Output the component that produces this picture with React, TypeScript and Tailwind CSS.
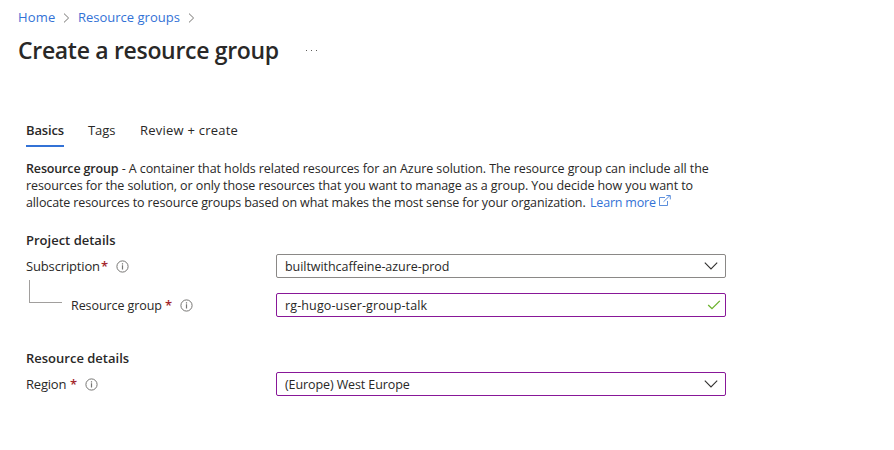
import React from "react";

const Info = () => (
  <svg className="size-[13px] shrink-0" viewBox="0 0 13 13" fill="none" stroke="#767573">
    <circle cx="6.5" cy="6.5" r="5.6" strokeWidth="1" />
    <path d="M6.5 5.3V9.5M6.5 3.3V4.5" strokeWidth="1.2" />
  </svg>
);
const Chevron = () => (
  <svg className="-mr-px h-[8px] w-[14px]" viewBox="0 0 14 8" fill="none" stroke="#323130" strokeWidth="1.1">
    <path d="M.8 .7L7 6.9L13.2 .7" />
  </svg>
);
const Check = () => (
  <svg className="-mr-[4px] h-[10px] w-[14px]" viewBox="0 0 14 10" fill="none" stroke="#6bb12c" strokeWidth="1.3">
    <path d="M1.2 5L5 8.7L12.8 .9" />
  </svg>
);
const Crumb = () => (
  <svg className="mt-[2px] h-[10px] w-[7px]" viewBox="0 0 7 10" fill="none" stroke="#767573">
    <path d="M1 .6L5.6 5L1 9.4" />
  </svg>
);
const External = () => (
  <svg className="mt-px ml-[4px] h-[11px] w-[12px]" viewBox="0 0 12 11" fill="none" stroke="#4a82d8" strokeWidth=".9">
    <path d="M6 2.5H.5V10.5H8.5V6M4.5 6.8L11 .5M7.3 .5H11.3V4.4" />
  </svg>
);
const Star = () => (
  <span className="w-[15px] text-[13px] font-semibold text-[#a4262c]">*</span>
);

export default function App() {
  return (
    <main className="h-[450px] w-[894px] overflow-hidden whitespace-nowrap bg-white font-['Open_Sans','Noto_Sans',sans-serif] text-[13px] leading-[17px] text-[#292827]">
      <nav className="flex h-[34px] items-center pl-[18px] text-[#3372d6]">
        <span className="w-[45px] tracking-[0.15px]">Home</span><Crumb />
        <span className="ml-[8px] w-[110px]">Resource groups</span><Crumb />
      </nav>
      <header className="flex h-[34px] items-center pl-[18px]">
        <h1 className="-mt-[2px] w-[288px] text-[23px] font-semibold leading-[34px] tracking-[-0.31px]">Create a resource group</h1>
        <svg className="h-[2px] w-[11px]" viewBox="0 0 11 2" fill="#605e5c">
          <path d="M0 0h1v1H0zM5 0h1v1H5zM10 0h1v1h-1z" />
        </svg>
      </header>
      <div className="mt-[54px] flex h-[25px] pl-[26px]">
        <span className="w-[38px] border-b-2 border-[#3372d6] font-semibold tracking-[-0.15px]">Basics</span>
        <span className="ml-[24px] w-[52px] tracking-[-0.1px]">Tags</span>
        <span className="tracking-[0.23px]">Review + create</span>
      </div>
      <div className="mt-[13px] pl-[26px] text-[12.5px]">
        <p className="tracking-[-0.078px]"><b className="font-semibold tracking-[-0.15px]">Resource group</b> - A container that holds related resources for an Azure solution. The resource group can include all the</p>
        <p className="tracking-[-0.09px]">resources for the solution, or only those resources that you want to manage as a group. You decide how you want to</p>
        <p className="flex tracking-[-0.12px]">
          <span className="w-[564px]">allocate resources to resource groups based on what makes the most sense for your organization.</span>
          <a className="flex text-[#3372d6]"><span className="w-[65px] tracking-[-0.2px]">Learn more</span><External /></a>
        </p>
      </div>
      <h2 className="mt-[21px] pl-[26px] font-semibold">Project details</h2>
      <div className="mt-[5px] flex h-[24px] items-center pl-[26px]">
        <div className="flex w-[250px] items-center">
          <span className="w-[75px] tracking-[-0.15px]">Subscription</span><Star /><Info />
        </div>
        <div className="flex h-[24px] w-[450px] items-center justify-between rounded-[2px] border border-[#8a8886] px-[8px]">
          <span className="text-[12.5px] tracking-[-0.05px]">builtwithcaffeine-azure-prod</span><Chevron />
        </div>
      </div>
      <div className="flex h-[39px] pl-[29px]">
        <div className="mt-[2px] h-[23px] w-[33px] border-b border-l border-[#a19f9d]" />
        <div className="mt-[15px] ml-[9px] flex h-[24px] w-[205px] items-center">
          <span className="w-[94px] text-[12.5px] tracking-[-0.08px]">Resource group</span><Star /><Info />
        </div>
        <div className="mt-[15px] flex h-[24px] w-[450px] items-center justify-between rounded-[2px] border border-[#881798] px-[8px]">
          <span className="text-[12.5px] tracking-[0.13px]">rg-hugo-user-group-talk</span><Check />
        </div>
      </div>
      <h2 className="mt-[33px] pl-[26px] font-semibold">Resource details</h2>
      <div className="mt-[5px] flex h-[24px] items-center pl-[26px]">
        <div className="flex w-[250px] items-center">
          <span className="w-[44px] tracking-[-0.2px]">Region</span><Star /><Info />
        </div>
        <div className="flex h-[24px] w-[450px] items-center justify-between rounded-[2px] border border-[#881798] px-[8px]">
          <span className="text-[12.5px] tracking-[-0.1px]">(Europe) West Europe</span><Chevron />
        </div>
      </div>
    </main>
  );
}
